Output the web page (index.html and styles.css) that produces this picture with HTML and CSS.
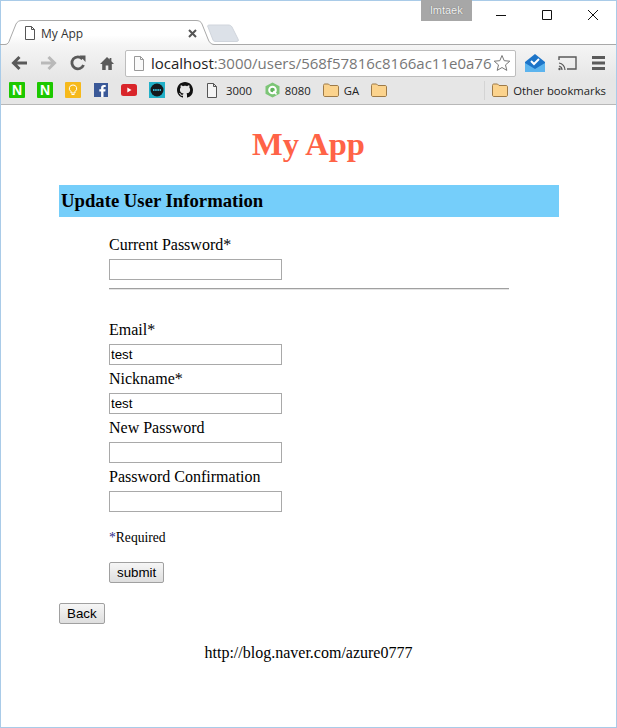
FILE: index.html
```html
<!DOCTYPE html>
<html lang="en">
<head>
<meta charset="utf-8">
<title>My App</title>
<link rel="stylesheet" href="styles.css">
</head>
<body>
<div class="window">
  <div class="tabstrip">
    <svg class="tab-shape" width="240" height="44" viewBox="0 0 240 44">
      <defs><linearGradient id="tabfill" x1="0" y1="0" x2="0" y2="1"><stop offset="0" stop-color="#fff"/><stop offset="0.6" stop-color="#fff"/><stop offset="1" stop-color="#f5f5f5"/></linearGradient></defs>
      <path d="M208 26C207 24.500 208 24 210 24H228C230 24 231 24.500 232 26L238 38C239 40 238 40.500 236 40.500H216C214 40.500 213.500 40 213 39Z" fill="#dce1e8" stroke="#d0d5dc"/>
      <path d="M5 43.500C8 43.500 9 41 10 38L16 23C17.500 20.500 19 19.500 22 19.500H196C199 19.500 201 20.500 202 23L208 38C209 41 211 43.500 214 43.500V44H5Z" fill="url(#tabfill)"/>
      <path d="M0 43.500H5C8 43.500 9 41 10 38L16 23C17.500 20.500 19 19.500 22 19.500H196C199 19.500 201 20.500 202 23L208 38C209 41 211 43.500 214 43.500H240" fill="none" stroke="#a9a9a9"/>
    </svg>
    <div class="tab">
      <svg class="doc" width="12" height="15" viewBox="0 0 12 15"><path d="M1.500.5H7.500L10.500 3.500V13.500H1.500ZM7.500.5V3.500H10.500" fill="#fff" stroke="#555"/></svg>
      <span class="tab-title">My App</span>
      <svg class="tab-close" width="9" height="9" viewBox="0 0 9 9"><path d="M1 1L8 8M8 1L1 8" stroke="#555" stroke-width="2"/></svg>
    </div>
    <div class="caption">
      <span class="user">lmtaek</span>
      <svg class="cap" width="46" height="30" viewBox="0 0 46 30"><path d="M18 15.500H28" stroke="#111"/></svg>
      <svg class="cap" width="46" height="30" viewBox="0 0 46 30"><path d="M18.500 10.500H27.500V19.500H18.500Z" fill="none" stroke="#111"/></svg>
      <svg class="cap" width="46" height="30" viewBox="0 0 46 30"><path d="M18 10L28 20M28 10L18 20" stroke="#111"/></svg>
    </div>
  </div>
  <div class="toolbar">
    <svg class="nav" width="18" height="16" viewBox="0 0 18 16"><path d="M16 8H3M8.500 2L2.500 8L8.500 14" fill="none" stroke="#5a5a5a" stroke-width="3"/></svg>
    <svg class="nav" width="18" height="16" viewBox="0 0 18 16"><path d="M1 8H14M8.500 2L14.500 8L8.500 14" fill="none" stroke="#b9b9b9" stroke-width="3"/></svg>
    <svg class="nav" width="18" height="16" viewBox="0 0 18 16"><path d="M14.500 10A6 6 0 1 1 13.500 4" fill="none" stroke="#5a5a5a" stroke-width="2.800"/><path d="M10.500 .5H16.500V7Z" fill="#5a5a5a"/></svg>
    <svg class="nav home" width="14" height="15" viewBox="0 0 16 16" preserveAspectRatio="none"><path d="M8 1L0 8.500H2.500V15H6.500V10H9.500V15H13.500V8.500H16L13 5.700V2H11V3.800Z" fill="#5a5a5a"/></svg>
    <div class="omnibox">
      <svg class="omni-doc" width="12" height="15" viewBox="0 0 12 15"><path d="M1.500.5H7.500L10.500 3.500V14.500H1.500ZM7.500.5V3.500H10.500" fill="#fafafa" stroke="#999"/></svg>
      <span class="url"><span class="host">localhost</span>:3000/users/568f57816c8166ac11e0a76</span>
      <svg class="star" width="18" height="18" viewBox="0 0 18 18"><path d="M9 1.500L11.200 6.700L16.800 7.200L12.500 10.900L13.800 16.400L9 13.500L4.200 16.400L5.500 10.900L1.200 7.200L6.800 6.700Z" fill="#fff" stroke="#777"/></svg>
    </div>
    <svg class="ext" width="20" height="18" viewBox="0 0 20 18"><path d="M0 8L10 0L20 8V18H0Z" fill="#1c74c8"/><path d="M0 9L10 15L20 9V18H0Z" fill="#5cb4ee"/><path d="M6 7L9 10L14 5" fill="none" stroke="#fff" stroke-width="2"/></svg>
    <svg class="ext cast" width="19" height="15" viewBox="0 0 19 15"><path d="M1 4V1H18V13H9" fill="none" stroke="#5a5a5a" stroke-width="1.400"/><path d="M1 7A7 7 0 0 1 7 14M1 10A4 4 0 0 1 4 14" fill="none" stroke="#5a5a5a" stroke-width="1.200"/><circle cx="1.500" cy="13" r="1.200" fill="#5a5a5a"/></svg>
    <svg class="ext menu" width="13" height="14" viewBox="0 0 13 14"><path d="M0 0H13V3H0ZM0 5.500H13V8.500H0ZM0 11H13V14H0Z" fill="#5a5a5a"/></svg>
  </div>
  <div class="bookmarks">
    <span class="bm-icon naver">N</span>
    <span class="bm-icon naver">N</span>
    <svg class="bm bm-wide" width="16" height="16" viewBox="0 0 16 16"><rect width="16" height="16" rx="1" fill="#f6b91b"/><path d="M8 3A3.500 3.500 0 0 0 6 9.500V11H10V9.500A3.500 3.500 0 0 0 8 3ZM6.500 12.500H9.500" fill="none" stroke="#fff"/></svg>
    <svg class="bm bm-wide" width="14" height="14" viewBox="0 0 14 14"><rect width="14" height="14" fill="#3b5998"/><path d="M9.500 14V8.500H11.300L11.600 6.300H9.500V5C9.500 4.300 9.800 3.900 10.600 3.900H11.700V2C11 1.900 10.400 1.900 9.800 1.900C8.200 1.900 7.100 2.900 7.100 4.700V6.300H5.300V8.500H7.100V14Z" fill="#fff"/></svg>
    <svg class="bm" width="16" height="12" viewBox="0 0 16 12"><rect width="16" height="12" rx="2.500" fill="#d9252a"/><path d="M6.300 3.500L10.500 6L6.300 8.500Z" fill="#fff"/></svg>
    <svg class="bm" width="16" height="16" viewBox="0 0 16 16"><rect width="16" height="16" fill="#22b0c8"/><circle cx="8" cy="8" r="6.500" fill="#14181c"/><path d="M4 8H12" stroke="#3ab4d0" stroke-width="2" stroke-dasharray="1.500 .7"/></svg>
    <svg class="bm bm-wide" width="16" height="16" viewBox="0 0 16 16"><path fill="#111" d="M8 0C3.580 0 0 3.580 0 8c0 3.540 2.290 6.530 5.470 7.590.4.070.55-.17.550-.38 0-.19-.01-.82-.01-1.490-2.010.37-2.530-.49-2.690-.94-.09-.23-.48-.94-.82-1.130-.28-.15-.68-.52-.01-.53.630-.01 1.080.58 1.230.82.720 1.210 1.870.87 2.330.66.070-.52.280-.87.510-1.070-1.780-.2-3.640-.89-3.640-3.950 0-.87.310-1.590.82-2.150-.08-.2-.36-1.020.08-2.120 0 0 .67-.21 2.200.82.640-.18 1.320-.27 2-.27.680 0 1.360.09 2 .27 1.530-1.040 2.200-.82 2.200-.82.440 1.100.16 1.920.08 2.120.51.560.82 1.270.82 2.150 0 3.070-1.870 3.750-3.650 3.950.290.250.54.730.54 1.480 0 1.070-.01 1.930-.01 2.200 0 .210.150.460.550.380A8.013 8.013 0 0 0 16 8c0-4.420-3.580-8-8-8z"/></svg>
    <svg class="bm-doc" width="12" height="15" viewBox="0 0 12 15"><path d="M1.500.5H7.500L10.500 3.500V14.500H1.500ZM7.500.5V3.500H10.500" fill="#f4f4f4" stroke="#555"/></svg>
    <span class="bm-label">3000</span>
    <svg class="bm-q" width="15" height="16" viewBox="0 0 15 16"><path d="M7.500 .5L14.500 4.300V11.700L7.500 15.500L.5 11.700V4.300Z" fill="#7cc576"/><circle cx="7.500" cy="8" r="4.300" fill="#fff"/><circle cx="7.500" cy="8" r="2.300" fill="#5fb35a"/><path d="M8.500 9L11.500 12.500" stroke="#fff" stroke-width="1.600"/></svg>
    <span class="bm-label">8080</span>
    <svg class="bm-folder" width="16" height="14" viewBox="0 0 16 14"><path d="M.5 2.500C.5 1.500 1 1 2 1H5.500L7 2.500H14C15 2.500 15.500 3 15.500 4V12C15.500 13 15 13.500 14 13.500H2C1 13.500 .5 13 .5 12Z" fill="#fbd38d" stroke="#9d7a48"/></svg>
    <span class="bm-label">GA</span>
    <svg class="bm-folder" width="16" height="14" viewBox="0 0 16 14"><path d="M.5 2.500C.5 1.500 1 1 2 1H5.500L7 2.500H14C15 2.500 15.500 3 15.500 4V12C15.500 13 15 13.500 14 13.500H2C1 13.500 .5 13 .5 12Z" fill="#fbd38d" stroke="#9d7a48"/></svg>
    <div class="other">
      <svg class="bm-folder" width="16" height="14" viewBox="0 0 16 14"><path d="M.5 2.500C.5 1.500 1 1 2 1H5.500L7 2.500H14C15 2.500 15.500 3 15.500 4V12C15.500 13 15 13.500 14 13.500H2C1 13.500 .5 13 .5 12Z" fill="#fbd38d" stroke="#9d7a48"/></svg>
      <span class="bm-label">Other bookmarks</span>
    </div>
  </div>
  <main class="page">
    <h1 class="title">My App</h1>
    <div class="container">
      <h3 class="band">Update User Information</h3>
      <form class="form">
        <div class="field"><label class="label">Current Password*</label><input class="input" type="password"></div>
        <hr class="rule">
        <div class="fields">
          <div class="field"><label class="label">Email*</label><input class="input" type="text" value="test"></div>
          <div class="field"><label class="label">Nickname*</label><input class="input" type="text" value="test"></div>
          <div class="field"><label class="label">New Password</label><input class="input" type="password"></div>
          <div class="field"><label class="label">Password Confirmation</label><input class="input" type="password"></div>
        </div>
        <p class="required"><span class="star-mark">*</span>Required</p>
        <button class="btn" type="button">submit</button>
      </form>
      <button class="btn back" type="button">Back</button>
    </div>
    <p class="footer">http://blog.naver.com/azure0777</p>
  </main>
</div>
</body>
</html>
```

FILE: styles.css
```css
* { box-sizing: border-box; }
html, body { margin: 0; padding: 0; }
body { width: 617px; height: 728px; overflow: hidden; background: #fff; }
.window { width: 617px; height: 728px; border: 1px solid #a9cbe8; display: flex; flex-direction: column; background: #fff; }
.tabstrip { height: 43px; position: relative; display: flex; flex: none; background: #fff; }
.tab-shape { position: absolute; left: -1px; top: 0; z-index: 1; }
.tab { position: relative; z-index: 2; width: 204px; display: flex; align-items: center; padding: 21px 0 0 23px; height: 43px; }
.doc { margin-right: 5px; flex: none; }
.tab-title { font: 12px "Open Sans", "Liberation Sans", sans-serif; color: #333; width: 147px; }
.tab-close { flex: none; }
.caption { margin-left: auto; display: flex; align-items: flex-start; margin-top: -1px; }
.user { width: 51px; height: 21px; background: #a7a7a7; color: #f4f4f4; font: 11px/20px "Liberation Sans", sans-serif; text-align: center; text-shadow: 0 0 1px #555; margin-right: 6px; }
.cap { display: block; }
.toolbar { height: 35px; flex: none; display: flex; align-items: center; padding: 2px 0 0 10px; background: linear-gradient(#f5f5f5, #e6e6e6); border-top: 1px solid #a9a9a9; }
.nav { flex: none; margin-right: 11px; }
.home { margin-left: 2px; }
.omnibox { width: 391px; height: 27px; flex: none; background: #fff; border: 1px solid #bdbdbd; border-radius: 2px; display: flex; align-items: center; padding-left: 7px; }
.omni-doc { flex: none; margin-right: 6px; }
.url { font: 15px "Open Sans", "Liberation Sans", sans-serif; color: #777; white-space: nowrap; width: 342px; }
.host { color: #222; }
.star { flex: none; margin-left: 0; }
.ext { flex: none; margin-left: 9px; }
.cast { margin-left: 13px; }
.menu { margin-left: 15px; }
.bookmarks { height: 26px; flex: none; display: flex; align-items: center; padding: 0 0 3px 8px; background: #e6e6e6; border-bottom: 1px solid #b8b8b8; }
.bm-icon { width: 16px; height: 16px; background: #1cc800; color: #fff; font: bold 14px/16px "Liberation Sans", sans-serif; text-align: center; border-radius: 1px; margin-right: 12px; flex: none; }
.bm { flex: none; margin-right: 12px; }
.bm-wide { margin-right: 13px; }
.bm-doc { flex: none; margin-right: 8px; }
.bm-q { flex: none; margin: 0 5px 0 13px; }
.bm-label { font: 11.300px "Open Sans", "Liberation Sans", sans-serif; color: #222; white-space: nowrap; }
.bm-folder { flex: none; margin: 0 5px 0 12px; }
.other { margin-left: auto; height: 19px; display: flex; align-items: center; border-left: 1px solid #d4d4d4; padding-right: 10px; }
.other .bm-folder { margin-left: 7px; }
.page { flex: 1; font-family: "Liberation Serif", serif; color: #000; display: flex; flex-direction: column; }
.title { margin: 21px 0 0; font-size: 32.500px; line-height: 37px; font-weight: bold; color: #ff6347; text-align: center; }
.container { width: 500px; margin: 22px 0 0 58px; }
.band { margin: 0; height: 32px; padding-left: 2px; background: #75cefa; font-size: 18.720px; line-height: 32px; font-weight: bold; }
.form { padding: 17px 0 0 50px; margin: 0; }
.field { display: flex; flex-direction: column; align-items: flex-start; }
.label { font-size: 16px; line-height: 21px; height: 21px; margin-bottom: 4px; }
.input { width: 173px; height: 21px; padding: 1px; border: 1px solid #a9a9a9; background: #fff; font: 13.333px "Liberation Sans", sans-serif; color: #000; border-radius: 0; }
.rule { width: 400px; margin: 8px 0 29px; border: 0; border-top: 1px solid #a0a0a0; border-bottom: 1px solid #e4e4e4; height: 2px; }
.fields { display: flex; flex-direction: column; gap: 3px; }
.required { margin: 18px 0 17px; font-size: 13.600px; line-height: 15px; }
.star-mark { color: #2a2a8a; }
.btn { display: block; height: 21px; padding: 0 7px; border: 1px solid #a0a0a0; border-radius: 2px; background: linear-gradient(#f6f6f6, #dedede); font: 13.333px "Liberation Sans", sans-serif; color: #000; }
.back { margin-top: 20px; }
.footer { margin: 19px 0 0; width: 615px; font-size: 16px; line-height: 19px; text-align: center; }
```
